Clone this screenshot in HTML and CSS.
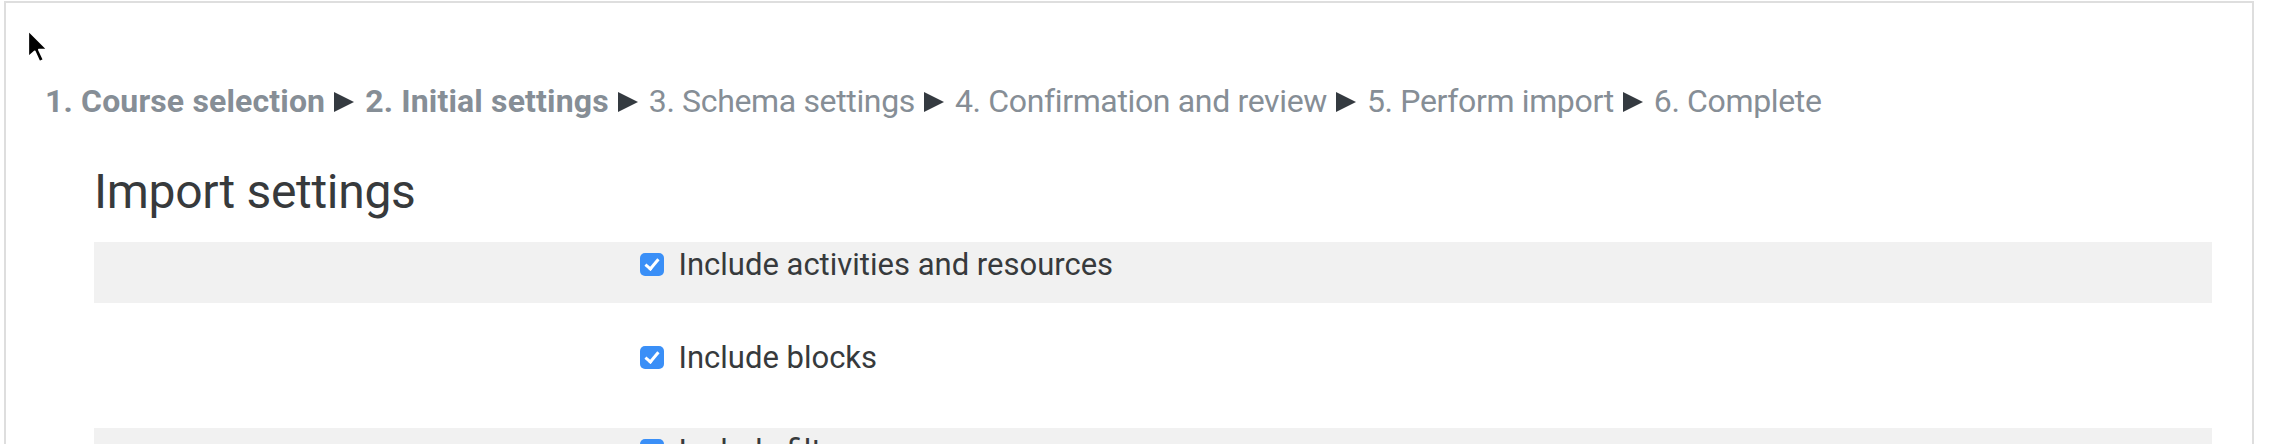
FILE: index.html
```html
<!DOCTYPE html>
<html lang="en">
<head>
<meta charset="UTF-8" />
<meta name="viewport" content="width=device-width, initial-scale=1" />
<title>Import settings</title>
<link rel="stylesheet" href="styles.css">
</head>
<body>

<div class="page">
  <div class="progress">
    <span class="done">1. Course selection</span><span class="sep"></span><span class="done">2. Initial settings</span><span class="sep"></span><span>3. Schema settings</span><span class="sep"></span><span>4. Confirmation and review</span><span class="sep"></span><span>5. Perform import</span><span class="sep"></span><span>6. Complete</span>
  </div>

  <form class="settings">
    <h2>Import settings</h2>

    <div class="fitem">
      <div class="flabel"></div>
      <label class="fcheck"><input type="checkbox" checked /> Include activities and resources</label>
    </div>
    <div class="fitem">
      <div class="flabel"></div>
      <label class="fcheck"><input type="checkbox" checked /> Include blocks</label>
    </div>
    <div class="fitem">
      <div class="flabel"></div>
      <label class="fcheck"><input type="checkbox" checked /> Include filters</label>
    </div>
    <div class="fitem">
      <div class="flabel"></div>
      <label class="fcheck"><input type="checkbox" checked /> Include calendar events</label>
    </div>
  </form>
</div>

<!-- mouse pointer from the capture -->
<svg class="cursor" width="26" height="37" viewBox="0 0 12 17">
  <path d="M1 1 L1 13.5 L4 10.8 L6.2 15.6 L8.2 14.7 L6 10 L10 10 Z" fill="#000" stroke="#fff" stroke-width="0.9" stroke-linejoin="round"/>
</svg>

</body>
</html>
```

FILE: styles.css
```css
html, body {
  margin: 0;
  overflow: hidden;
}
body {
  font-family: Roboto, "Liberation Sans", Arial, sans-serif;
  color: #373a3c;
  background: #fff;
}
.page {
  margin: 1px 28px 0 4px;
  border: 2px solid #dedede;
  border-bottom: 0;
  min-height: 520px;
  padding: 74px 40px 0 39px;
}
.progress {
  font-size: 32px;
  line-height: 48px;
  letter-spacing: -0.35px;
  color: #868e96;
  white-space: nowrap;
}
.progress .done {
  font-weight: bold;
  letter-spacing: 0.15px;
}
.progress .sep {
  display: inline-block;
  width: 0;
  height: 0;
  border-left: 20px solid #343a40;
  border-top: 10px solid transparent;
  border-bottom: 10px solid transparent;
  margin: 0 11px 0 9px;
}
.settings {
  margin: 37px 0 0 49px;
}
.settings h2 {
  font-size: 48px;
  font-weight: normal;
  letter-spacing: -0.3px;
  line-height: 59px;
  margin: 0 0 21px;
  color: #373a3c;
}
.fitem {
  display: grid;
  grid-template-columns: 25% 1fr;
  padding-bottom: 16px;
  margin-bottom: 32px;
}
.fitem:nth-of-type(odd) {
  background: #f1f1f1;
}
.fcheck {
  font-size: 31px;
  line-height: 45px;
  padding-left: 16px;
  display: flex;
  align-items: center;
}
.fcheck input {
  appearance: none;
  -webkit-appearance: none;
  width: 24px;
  height: 23px;
  margin: 0 15px 0 0;
  border-radius: 5px;
  background: #3a8ff7;
  position: relative;
  flex: none;
}
.fcheck input:checked::after {
  content: "";
  position: absolute;
  left: 8px;
  top: 3px;
  width: 5px;
  height: 11px;
  border-right: 3px solid #fff;
  border-bottom: 3px solid #fff;
  transform: rotate(40deg);
}
.cursor {
  position: absolute;
  left: 26px;
  top: 28px;
}
```
